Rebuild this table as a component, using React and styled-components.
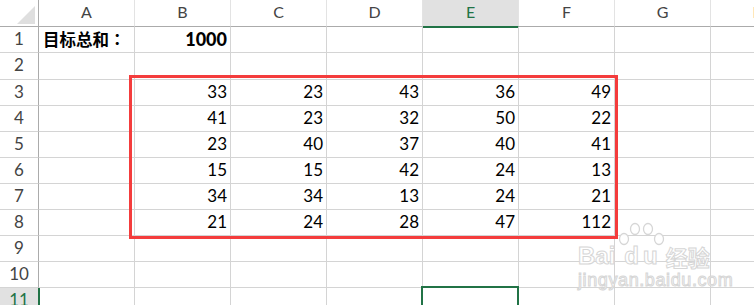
import React from 'react';
import styled, { createGlobalStyle } from 'styled-components';

const GlobalStyle = createGlobalStyle`
  html, body {
    margin: 0;
    padding: 0;
    background: #fff;
    overflow: hidden;
  }
  body {
    font-family: Lato, "Noto Sans", "Noto Sans CJK SC", sans-serif;
  }
`;

const GRID = '#d4d4d4';
const HEAD_LINE = '#ababab';
const GREEN = '#217346';
const RED = '#f43c3c';

const Sheet = styled.div`
  position: relative;
  width: 754px;
  height: 305px;
  overflow: hidden;
  display: grid;
  grid-template-columns: 39px repeat(8, 96px);
  grid-template-rows: 27px 26px 27px repeat(8, 26px) 1fr;
  background: #fff;
`;

const Corner = styled.div`
  position: relative;
  border-right: 1px solid ${HEAD_LINE};
  border-bottom: 1px solid ${HEAD_LINE};
  &::after {
    content: '';
    position: absolute;
    right: 3px;
    bottom: 2px;
    width: 18px;
    height: 18px;
    background: #dfdfdf;
    clip-path: polygon(100% 0, 100% 100%, 0 100%);
  }
`;

const ColHead = styled.div`
  border-right: 1px solid #e3e3e3;
  border-bottom: 1px solid ${p => (p.$selected ? GREEN : HEAD_LINE)};
  box-shadow: ${p => (p.$selected ? `0 1px 0 ${GREEN}` : 'none')};
  background: ${p => (p.$selected ? '#e1e1e1' : '#fff')};
  color: ${p => (p.$selected ? GREEN : '#444')};
  font-size: 16px;
  line-height: 23px;
  text-align: center;
`;

const RowHead = styled.div`
  border-right: 1px solid ${p => (p.$selected ? GREEN : HEAD_LINE)};
  border-bottom: 1px solid ${GRID};
  box-shadow: ${p => (p.$selected ? `1px 0 0 ${GREEN}` : 'none')};
  background: ${p => (p.$selected ? '#e1e1e1' : '#fff')};
  color: ${p => (p.$selected ? GREEN : '#444')};
  font-size: 17px;
  line-height: 24px;
  text-align: center;
`;

const Cell = styled.div`
  border-right: 1px solid ${GRID};
  border-bottom: 1px solid ${GRID};
  padding: 0 3px 0 4px;
  color: #000;
  font-size: ${p => (p.$bold ? '18px' : '17px')};
  font-weight: ${p => (p.$bold ? 900 : 400)};
  line-height: 24px;
  text-align: ${p => p.$align || 'right'};
  white-space: nowrap;
`;

const Label = styled.span`
  font-family: "Noto Sans CJK SC", sans-serif;
  font-size: 16.5px;
  font-weight: 700;
`;

// full-width colon sits centred in its box
const Colon = styled.span`
  font-family: "Noto Sans CJK TC", "Noto Sans CJK SC", sans-serif;
`;

const RedFrame = styled.div`
  position: absolute;
  left: 129px;
  top: 75px;
  width: 489px;
  height: 164px;
  box-sizing: border-box;
  border: 3px solid ${RED};
  pointer-events: none;
`;

const ActiveCell = styled.div`
  position: absolute;
  left: 421px;
  top: 286px;
  width: 98px;
  height: 40px;
  box-sizing: border-box;
  border: 2px solid ${GREEN};
`;

const Watermark = styled.div`
  position: absolute;
  left: 578px;
  top: 220px;
  display: flex;
  flex-direction: column;
  align-items: flex-start;
  color: rgba(255, 255, 255, 0.92);
  -webkit-text-stroke: 1px #d6d6d6;
  font-family: "Liberation Sans", Arial, sans-serif;
  font-weight: 700;
  white-space: nowrap;
  pointer-events: none;
`;

const MarkTop = styled.div`
  display: flex;
  align-items: flex-end;
  height: 47px;
  font-size: 24px;
  line-height: 22px;
`;

const DuMark = styled.span`
  position: relative;
  margin-left: 4px;
  padding: 0 4px 0 5px;
  letter-spacing: 4px;
`;

const Paw = styled.svg`
  position: absolute;
  left: -2px;
  top: -23px;
`;

const MarkCn = styled.span`
  font-family: "Noto Sans CJK SC", sans-serif;
  font-size: 22px;
`;

const MarkUrl = styled.div`
  margin-top: 4px;
  font-size: 18px;
  line-height: 18px;
  font-weight: 400;
  letter-spacing: 0.6px;
`;

const COLS = ['A', 'B', 'C', 'D', 'E', 'F', 'G', 'H'];

const DATA = [
  [33, 23, 43, 36, 49],
  [41, 23, 32, 50, 22],
  [23, 40, 37, 40, 41],
  [15, 15, 42, 24, 13],
  [34, 34, 13, 24, 21],
  [21, 24, 28, 47, 112],
];

const rowValues = (r) => {
  if (r === 1) return [<Label key="l">目标总和<Colon>：</Colon></Label>, '1000'];
  if (r >= 3 && r <= 8) return ['', ...DATA[r - 3]];
  return [];
};

const App = () => {
  const rows = [];
  for (let r = 1; r <= 11; r++) {
    const vals = rowValues(r);
    rows.push(<RowHead key={`h${r}`} $selected={r === 11}>{r}</RowHead>);
    COLS.forEach((c, i) => {
      rows.push(
        <Cell
          key={`${c}${r}`}
          $align={r === 1 && i === 0 ? 'left' : 'right'}
          $bold={r === 1}
        >
          {vals[i]}
        </Cell>
      );
    });
  }

  return (
    <>
      <GlobalStyle />
      <Sheet>
        <Corner />
        {COLS.map(c => (
          <ColHead key={c} $selected={c === 'E'}>{c}</ColHead>
        ))}
        {rows}
        <RedFrame />
        <ActiveCell />
        <Watermark>
          <MarkTop>
            <span>Bai</span>
            <DuMark>
              <Paw width="50" height="27" viewBox="0 0 50 27">
                <g fill="rgba(255,255,255,0.92)" stroke="#d6d6d6" strokeWidth="1.3">
                  <ellipse cx="7" cy="17" rx="4.5" ry="5.5" />
                  <ellipse cx="18" cy="7" rx="4.5" ry="5.5" />
                  <ellipse cx="31" cy="7" rx="4.5" ry="5.5" />
                  <ellipse cx="42" cy="17" rx="4.5" ry="5.5" />
                </g>
              </Paw>
              du
            </DuMark>
            <MarkCn>经验</MarkCn>
          </MarkTop>
          <MarkUrl>jingyan.baidu.com</MarkUrl>
        </Watermark>
      </Sheet>
    </>
  );
};

export default App;
